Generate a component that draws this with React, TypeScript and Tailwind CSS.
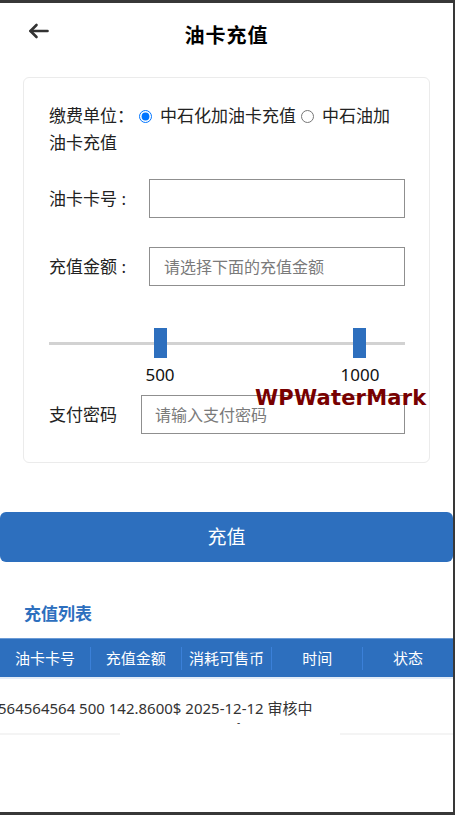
import React from 'react';

const BLUE = 'bg-[#2d6fbe]';

const Field: React.FC<{ label: string; labelW: string; placeholder?: string; pad: string }> = ({ label, labelW, placeholder, pad }) => (
  <div className="flex items-center">
    <div className={`${labelW} shrink-0 text-[17px] text-[#222]`}>{label}</div>
    <input
      placeholder={placeholder}
      className={`flex-1 min-w-0 h-[39px] border border-[#8f8f8f] ${pad} text-[16px] text-[#222] placeholder:text-[#7a7a7a] outline-none`}
    />
  </div>
);

const App: React.FC = () => {
  const cols = ['油卡卡号', '充值金额', '消耗可售币', '时间', '状态'];

  return (
    <div className="h-[815px] w-[455px] overflow-hidden bg-white border-t-[3px] border-r-[2px] border-b-[3px] border-[#383838] font-['Noto_Sans','Noto_Sans_CJK_SC',sans-serif] text-[#222]">
      {/* header */}
      <div className="relative h-[74px]">
        <div className="absolute left-[28px] top-[20px] text-[#333]">
          <svg width="21" height="16" viewBox="0 0 21 16" fill="none" stroke="currentColor" strokeWidth="2.6" strokeLinecap="round" strokeLinejoin="round">
            <path d="M19.5 8H2.5" />
            <path d="M8.5 2L2.5 8l6 6" />
          </svg>
        </div>
        <div className="pt-[19px] text-center text-[20px] leading-[28px] font-bold tracking-[1px] text-black">油卡充值</div>
      </div>

      {/* form card */}
      <div className="relative mx-[23px] rounded-[6px] border border-[#ebebeb] pl-[25px] pr-[24px] pt-[24px] pb-[28px]">
        <div className="text-[17px] leading-[27px]">
          缴费单位：
          <input type="radio" name="unit" defaultChecked className="m-0 ml-[5px] mr-[8px] h-[13px] w-[13px] align-[-1px] accent-[#0075ff]" />
          中石化加油卡充值
          <input type="radio" name="unit" className="m-0 ml-[5px] mr-[8px] h-[13px] w-[13px] align-[-1px]" />
          中石油加油卡充值
        </div>

        <div className="mt-[23px]">
          <Field label="油卡卡号 :" labelW="w-[100px]" pad="pl-[14px]" />
        </div>
        <div className="mt-[29px]">
          <Field label="充值金额 :" labelW="w-[100px]" placeholder="请选择下面的充值金额" pad="pl-[14px]" />
        </div>

        {/* range slider */}
        <div className="mt-[42px]">
          <div className="relative h-[30px]">
            <div className="absolute left-0 right-0 top-[14px] h-[3px] bg-[#d2d2d2]" />
            <div className={`absolute top-0 left-[105px] h-[30px] w-[13px] ${BLUE}`} />
            <div className={`absolute top-0 left-[304px] h-[30px] w-[13px] ${BLUE}`} />
          </div>
          <div className="relative mt-[5px] h-[24px] text-[17px] leading-[24px] text-[#111]">
            <span className="absolute left-[111px] -translate-x-1/2">500</span>
            <span className="absolute left-[311px] -translate-x-1/2">1000</span>
          </div>
        </div>

        <div className="mt-[8px]">
          <Field label="支付密码" labelW="w-[92px]" placeholder="请输入支付密码" pad="pl-[13px]" />
        </div>

        <div className="absolute left-[231px] top-[307px] font-['DejaVu_Sans',sans-serif] text-[21px] font-bold leading-[26px] tracking-[0.2px] text-[#780000]">
          WPWaterMark
        </div>
      </div>

      {/* submit */}
      <div className="mt-[49px]">
        <button className={`h-[50px] w-full rounded-[6px] ${BLUE} text-[19px] text-white`}>充值</button>
      </div>

      <div className="mt-[40px] pl-[24px] text-[17px] font-bold leading-[24px] text-[#2d6fbe]">充值列表</div>

      {/* table */}
      <div className="mt-[12px]">
        <div className={`flex h-[39px] items-center border-t border-[#6b9bd6] ${BLUE} text-[15px] text-white`}>
          {cols.map((c, i) => (
            <React.Fragment key={c}>
              {i > 0 && <div className="h-[23px] w-px bg-[#3b80d8]" />}
              <div className="flex-1 text-center">{c}</div>
            </React.Fragment>
          ))}
        </div>
        <div className="h-[2px] bg-[#e3ecf7]" />
        <div className="pt-[18px] text-[15px] leading-[22px] text-[#333] whitespace-nowrap -ml-[2px]">
          564564564 500 142.8600$ 2025-12-12 审核中
        </div>
        <div className="pl-[237px] text-[10px] leading-[6px] text-[#333]">-</div>
        <div className="mt-[8px] flex">
          <div className="h-[2px] w-[120px] bg-[#f4f4f4]" />
          <div className="flex-1" />
          <div className="h-[2px] w-[113px] bg-[#f4f4f4]" />
        </div>
      </div>
    </div>
  );
};

export default App;
